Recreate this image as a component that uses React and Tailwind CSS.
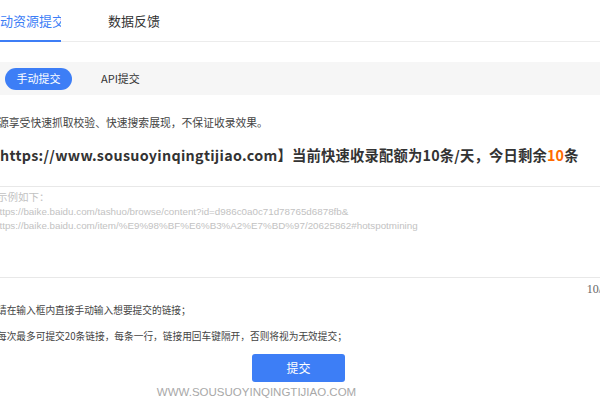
import React from "react";

const cjk = { fontFamily: '"Noto Sans CJK SC", "Microsoft YaHei", sans-serif' };
const arial = { fontFamily: '"Liberation Sans", Arial, sans-serif' };

export default function App() {
  return (
    <div
      className="w-[600px] h-[400px] overflow-hidden bg-white relative text-[#333]"
      style={cjk}
    >
      {/* Top tabs */}
      <div className="h-[42px] border-b border-[#ececec] flex items-stretch">
        <div className="w-[61px] flex items-center border-b-2 border-[#3d7ef6] -mb-px overflow-hidden">
          <span className="text-[13px] text-[#3d7ef6] whitespace-nowrap leading-none">动资源提交</span>
        </div>
        <div className="ml-[47px] flex items-center">
          <span className="text-[13px] text-[#333] whitespace-nowrap leading-none">数据反馈</span>
        </div>
      </div>

      {/* Sub tabs */}
      <div className="mt-[20px] h-[33px] bg-[#f6f6f6] flex items-center pl-[5px]">
        <div className="h-[22px] w-[67px] rounded-full bg-[#3d7ef6] flex items-center justify-center text-white text-[11px] leading-none">
          手动提交
        </div>
        <div className="ml-[29px] text-[11px] text-[#333] leading-none">API提交</div>
      </div>

      {/* Notice */}
      <div className="mt-[19px] h-[16px] flex items-center text-[10.8px] text-[#444] whitespace-nowrap -ml-[2px]">
        源享受快速抓取校验、快速搜索展现，不保证收录效果。
      </div>

      {/* Heading */}
      <div className="mt-[15px] h-[20px] flex items-center text-[14.3px] font-bold text-[#333] whitespace-nowrap">
        <span className="tracking-[0.3px]">https://www.sousuoyinqingtijiao.com</span>
        <span className="tracking-[0.2px]">
          】当前快速收录配额为10条/天，今日剩余<span className="text-[#ff6a00]">10</span>条
        </span>
      </div>

      {/* Textarea */}
      <div className="mt-[21px] h-[92px] border-y border-[#e8e8e8] pt-[3px] overflow-hidden">
        <div className="text-[10.5px] leading-[14.5px] text-[#c2c2c2] whitespace-nowrap -ml-[3px]">示例如下：</div>
        <div className="text-[9.8px] leading-[14.5px] text-[#c2c2c2] whitespace-nowrap -ml-[6px]" style={arial}>
          https://baike.baidu.com/tashuo/browse/content?id=d986c0a0c71d78765d6878fb&amp;
        </div>
        <div className="text-[9.8px] leading-[14.5px] text-[#c2c2c2] whitespace-nowrap -ml-[6px]" style={arial}>
          https://baike.baidu.com/item/%E9%98%BF%E6%B3%A2%E7%BD%97/20625862#hotspotmining
        </div>
      </div>

      {/* Counter */}
      <div className="h-[22px] flex items-center justify-end -mr-[14px]">
        <span className="text-[12px] text-[#666] leading-none" style={{ fontFamily: '"Liberation Serif", serif' }}>
          10/20
        </span>
      </div>

      {/* Instructions */}
      <div className="mt-[2px] h-[16px] flex items-center text-[9.7px] text-[#444] whitespace-nowrap -ml-[3px]">
        请在输入框内直接手动输入想要提交的链接；
      </div>
      <div className="mt-[10px] h-[16px] flex items-center text-[9.7px] text-[#444] whitespace-nowrap -ml-[3px]">
        每次最多可提交20条链接，每条一行，链接用回车键隔开，否则将视为无效提交；
      </div>

      {/* Button */}
      <div className="mt-[10px] flex pl-[252px]">
        <div className="w-[93px] h-[28px] rounded-[3px] bg-[#3d7ef6] flex items-center justify-center text-white text-[12px] leading-none">
          提交
        </div>
      </div>

      {/* Watermark */}
      <div className="mt-[3px] text-center text-[11.5px] text-[#a8a8a8] leading-[14px] pr-[87px]" style={arial}>
        WWW.SOUSUOYINQINGTIJIAO.COM
      </div>
    </div>
  );
}
